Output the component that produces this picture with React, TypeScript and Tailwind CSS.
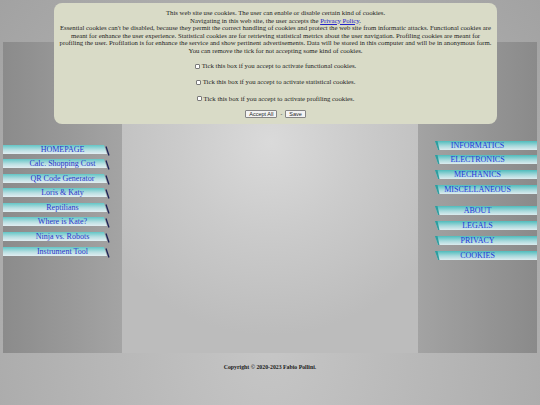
import React from 'react';

const leftItems = [
  'HOMEPAGE',
  'Calc. Shopping Cost',
  'QR Code Generator',
  'Loris & Katy',
  'Reptilians',
  'Where is Kate?',
  'Ninja vs. Robots',
  'Instrument Tool',
];

const rightTop = ['INFORMATICS', 'ELECTRONICS', 'MECHANICS', 'MISCELLANEOUS'];
const rightBottom = ['ABOUT', 'LEGALS', 'PRIVACY', 'COOKIES'];

const LeftBar = () => (
  <svg className="absolute left-0 top-0" width="110" height="12" viewBox="0 0 110 12">
    <defs>
      <linearGradient id="lbar" x1="0" y1="0" x2="0" y2="1">
        <stop offset="0" stopColor="#63c6c6" />
        <stop offset="0.55" stopColor="#b9dfe2" />
        <stop offset="1" stopColor="#e2eef2" />
      </linearGradient>
    </defs>
    <polygon points="0,0 101,0 104,9 0,9" fill="url(#lbar)" />
    <line x1="103" y1="1.5" x2="106" y2="10.5" stroke="#1c2458" strokeWidth="1.3" />
  </svg>
);

const RightBar = () => (
  <svg className="absolute right-0 top-0" width="102" height="9" viewBox="0 0 102 9">
    <defs>
      <linearGradient id="rbar" x1="0" y1="0" x2="0" y2="1">
        <stop offset="0" stopColor="#4fbcbc" />
        <stop offset="0.55" stopColor="#a9d9dc" />
        <stop offset="1" stopColor="#dcecef" />
      </linearGradient>
    </defs>
    <polygon points="0,0 102,0 102,9 3,9" fill="url(#rbar)" />
    <polygon points="0,0 2.5,0 4.5,9 3,9" fill="#2f9c9e" />
  </svg>
);

const LeftLink = ({ label }: { label: string }) => (
  <div className="relative h-[9px] flex items-center justify-center">
    <LeftBar />
    <span className="relative text-[8px] leading-[9px] text-[#2a36cc]">{label}</span>
  </div>
);

const RightLink = ({ label }: { label: string }) => (
  <div className="relative h-[9px] flex items-center justify-center">
    <RightBar />
    <span className="relative text-[8px] leading-[9px] text-[#2236dc]">{label}</span>
  </div>
);

const CookieRow = ({ text }: { text: string }) => (
  <div className="h-[9px] flex items-center justify-center">
    <span className="inline-block w-[5px] h-[5px] border border-[#7a7a7a] bg-white rounded-[1px] mr-[2px]" />
    <span>{text}</span>
  </div>
);

export default function App() {
  return (
    <div
      className="relative w-full min-h-[405px] bg-[radial-gradient(ellipse_at_50%_85%,#c6c6c6_0%,#b6b6b6_45%,#a2a2a2_100%)]"
      style={{ fontFamily: '"Liberation Serif", "Times New Roman", serif' }}
    >
      {/* main layout */}
      <div className="pt-[42px] px-[3px]">
        <div className="flex h-[311px]">
          <div className="w-[119px] bg-[linear-gradient(to_right,#8b8b8b,#a4a4a4)] pt-[102.5px]">
            <div className="flex flex-col gap-[5.6px]">
              {leftItems.map((l) => (
                <LeftLink key={l} label={l} />
              ))}
            </div>
          </div>
          <div className="w-[296px] bg-[radial-gradient(circle_at_50%_32%,#dadada_0%,#cbcbcb_35%,#bcbcbc_75%)]" />
          <div className="w-[119px] bg-[linear-gradient(to_right,#a3a3a3,#8a8a8a)] pt-[98.5px]">
            <div className="flex flex-col gap-[5.7px]">
              {rightTop.map((l) => (
                <RightLink key={l} label={l} />
              ))}
            </div>
            <div className="flex flex-col gap-[5.8px] mt-[12.6px]">
              {rightBottom.map((l) => (
                <RightLink key={l} label={l} />
              ))}
            </div>
          </div>
        </div>
        <div className="pt-[10px] text-center text-[5.8px] leading-[8px] font-bold text-[#1a1a1a]">
          Copyright © 2020-2023 Fabio Pollini.
        </div>
      </div>

      {/* cookie banner */}
      <div className="absolute top-[3px] left-[54px] w-[443px] h-[121px] rounded-[8px] bg-[#d9dbc7] text-center text-[6.75px] leading-[7.6px] text-[#1e1e1e] pt-[6px] whitespace-nowrap">
        <p>
          This web site use cookies. The user can enable or disable certain kind of cookies.
          <br />
          Navigating in this web site, the user accepts the{' '}
          <a className="text-[#2525c8] underline">Privacy Policy</a>.
          <br />
          Essential cookies can't be disabled, because they permit the correct handling of cookies and protect the web site from informatic attacks. Functional cookies are
          <br />
          meant for enhance the user experience. Statistical cookies are for retrieving statistical metrics about the user navigation. Profiling cookies are meant for
          <br />
          profiling the user. Profilation is for enhance the service and show pertinent advertisements. Data will be stored in this computer and will be in anonymous form.
          <br />
          You can remove the tick for not accepting some kind of cookies.
        </p>
        <div className="mt-[7px] flex flex-col gap-[7.2px]">
          <CookieRow text="Tick this box if you accept to activate functional cookies." />
          <CookieRow text="Tick this box if you accept to activate statistical cookies." />
          <CookieRow text="Tick this box if you accept to activate profiling cookies." />
        </div>
        <div
          className="mt-[7.5px] flex items-center justify-center gap-[2px] text-[5.5px]"
          style={{ fontFamily: '"Liberation Sans", Arial, sans-serif' }}
        >
          <span className="h-[8px] px-[3px] flex items-center border border-[#858585] bg-[#f3f3f3] rounded-[1px]">Accept All</span>
          <span className="px-[1px]">-</span>
          <span className="h-[8px] px-[3px] flex items-center border border-[#858585] bg-[#f3f3f3] rounded-[1px]">Save</span>
        </div>
      </div>
    </div>
  );
}
